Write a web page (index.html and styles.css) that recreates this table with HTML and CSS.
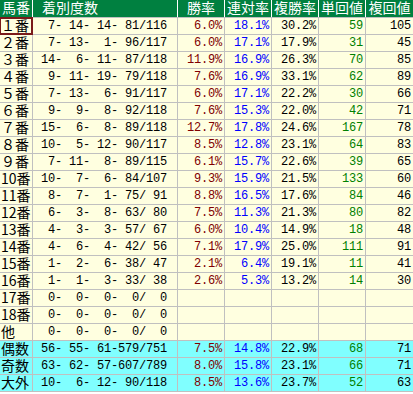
FILE: index.html
```html
<!DOCTYPE html>
<html lang="ja">
<head>
<meta charset="utf-8">
<link rel="stylesheet" href="styles.css">
</head>
<body>
<div class="tbl">
  <div class="row head">
    <div class="c h">馬番</div><div class="c h rec-h">着別度数</div><div class="c h">勝率</div><div class="c h">連対率</div><div class="c h">複勝率</div><div class="c h">単回値</div><div class="c h">複回値</div>
  </div>
  <div class="row"><div class="c lbl sel">１番</div><div class="c rec"> 7- 14- 14- 81/116</div><div class="c num win">6.0%</div><div class="c num ren">18.1%</div><div class="c num fk">30.2%</div><div class="c num tan">59</div><div class="c num fkv">105</div></div>
  <div class="row"><div class="c lbl">２番</div><div class="c rec"> 7- 13-  1- 96/117</div><div class="c num win">6.0%</div><div class="c num ren">17.1%</div><div class="c num fk">17.9%</div><div class="c num tan">31</div><div class="c num fkv">45</div></div>
  <div class="row"><div class="c lbl">３番</div><div class="c rec">14-  6- 11- 87/118</div><div class="c num win">11.9%</div><div class="c num ren">16.9%</div><div class="c num fk">26.3%</div><div class="c num tan">70</div><div class="c num fkv">85</div></div>
  <div class="row"><div class="c lbl">４番</div><div class="c rec"> 9- 11- 19- 79/118</div><div class="c num win">7.6%</div><div class="c num ren">16.9%</div><div class="c num fk">33.1%</div><div class="c num tan">62</div><div class="c num fkv">89</div></div>
  <div class="row"><div class="c lbl">５番</div><div class="c rec"> 7- 13-  6- 91/117</div><div class="c num win">6.0%</div><div class="c num ren">17.1%</div><div class="c num fk">22.2%</div><div class="c num tan">30</div><div class="c num fkv">66</div></div>
  <div class="row"><div class="c lbl">６番</div><div class="c rec"> 9-  9-  8- 92/118</div><div class="c num win">7.6%</div><div class="c num ren">15.3%</div><div class="c num fk">22.0%</div><div class="c num tan">42</div><div class="c num fkv">71</div></div>
  <div class="row"><div class="c lbl">７番</div><div class="c rec">15-  6-  8- 89/118</div><div class="c num win">12.7%</div><div class="c num ren">17.8%</div><div class="c num fk">24.6%</div><div class="c num tan">167</div><div class="c num fkv">78</div></div>
  <div class="row"><div class="c lbl">８番</div><div class="c rec">10-  5- 12- 90/117</div><div class="c num win">8.5%</div><div class="c num ren">12.8%</div><div class="c num fk">23.1%</div><div class="c num tan">64</div><div class="c num fkv">83</div></div>
  <div class="row"><div class="c lbl">９番</div><div class="c rec"> 7- 11-  8- 89/115</div><div class="c num win">6.1%</div><div class="c num ren">15.7%</div><div class="c num fk">22.6%</div><div class="c num tan">39</div><div class="c num fkv">65</div></div>
  <div class="row"><div class="c lbl">10番</div><div class="c rec">10-  7-  6- 84/107</div><div class="c num win">9.3%</div><div class="c num ren">15.9%</div><div class="c num fk">21.5%</div><div class="c num tan">133</div><div class="c num fkv">60</div></div>
  <div class="row"><div class="c lbl">11番</div><div class="c rec"> 8-  7-  1- 75/ 91</div><div class="c num win">8.8%</div><div class="c num ren">16.5%</div><div class="c num fk">17.6%</div><div class="c num tan">84</div><div class="c num fkv">46</div></div>
  <div class="row"><div class="c lbl">12番</div><div class="c rec"> 6-  3-  8- 63/ 80</div><div class="c num win">7.5%</div><div class="c num ren">11.3%</div><div class="c num fk">21.3%</div><div class="c num tan">80</div><div class="c num fkv">82</div></div>
  <div class="row"><div class="c lbl">13番</div><div class="c rec"> 4-  3-  3- 57/ 67</div><div class="c num win">6.0%</div><div class="c num ren">10.4%</div><div class="c num fk">14.9%</div><div class="c num tan">18</div><div class="c num fkv">48</div></div>
  <div class="row"><div class="c lbl">14番</div><div class="c rec"> 4-  6-  4- 42/ 56</div><div class="c num win">7.1%</div><div class="c num ren">17.9%</div><div class="c num fk">25.0%</div><div class="c num tan">111</div><div class="c num fkv">91</div></div>
  <div class="row"><div class="c lbl">15番</div><div class="c rec"> 1-  2-  6- 38/ 47</div><div class="c num win">2.1%</div><div class="c num ren">6.4%</div><div class="c num fk">19.1%</div><div class="c num tan">11</div><div class="c num fkv">41</div></div>
  <div class="row"><div class="c lbl">16番</div><div class="c rec"> 1-  1-  3- 33/ 38</div><div class="c num win">2.6%</div><div class="c num ren">5.3%</div><div class="c num fk">13.2%</div><div class="c num tan">14</div><div class="c num fkv">30</div></div>
  <div class="row"><div class="c lbl">17番</div><div class="c rec"> 0-  0-  0-  0/  0</div><div class="c num"></div><div class="c num"></div><div class="c num"></div><div class="c num"></div><div class="c num"></div></div>
  <div class="row"><div class="c lbl">18番</div><div class="c rec"> 0-  0-  0-  0/  0</div><div class="c num"></div><div class="c num"></div><div class="c num"></div><div class="c num"></div><div class="c num"></div></div>
  <div class="row"><div class="c lbl">他</div><div class="c rec"> 0-  0-  0-  0/  0</div><div class="c num"></div><div class="c num"></div><div class="c num"></div><div class="c num"></div><div class="c num"></div></div>
  <div class="row sum"><div class="c lbl">偶数</div><div class="c rec">56- 55- 61-579/751</div><div class="c num win">7.5%</div><div class="c num ren">14.8%</div><div class="c num fk">22.9%</div><div class="c num tan">68</div><div class="c num fkv">71</div></div>
  <div class="row sum"><div class="c lbl">奇数</div><div class="c rec">63- 62- 57-607/789</div><div class="c num win">8.0%</div><div class="c num ren">15.8%</div><div class="c num fk">23.1%</div><div class="c num tan">66</div><div class="c num fkv">71</div></div>
  <div class="row sum"><div class="c lbl">大外</div><div class="c rec">10-  6- 12- 90/118</div><div class="c num win">8.5%</div><div class="c num ren">13.6%</div><div class="c num fk">23.7%</div><div class="c num tan">52</div><div class="c num fkv">63</div></div>
</div>
</body>
</html>
```
FILE: styles.css
```css
html, body {
  margin: 0;
  padding: 0;
  background: #ffffff;
}

.tbl {
  width: 413px;
  display: flex;
  flex-direction: column;
  row-gap: 1px;
  background: #c0c0c0;
  padding-bottom: 1px;
}

.row {
  display: grid;
  grid-template-columns: 32px 144px 46px 46px 46px 46px 47px;
  column-gap: 1px;
  height: 16px;
  background: #c0c0c0;
}

.row.head {
  height: 17px;
  background: #ffffff;
}

.c {
  background: #ffffe0;
  height: 16px;
  line-height: 16px;
  white-space: pre;
  color: #000000;
  font-family: "Liberation Mono", "DejaVu Sans Mono", monospace;
  font-size: 12px;
  letter-spacing: -0.2px;
}

.row.sum .c {
  background: #80ffff;
}

.c.h {
  background: #008040;
  color: #ffffff;
  height: 17px;
  line-height: 15px;
  text-align: center;
  font-family: "Noto Sans CJK JP", sans-serif;
  font-size: 14px;
  letter-spacing: 0;
}

.c.h.rec-h {
  text-align: left;
  padding-left: 9px;
}

.c.lbl {
  font-family: "Noto Sans CJK JP", sans-serif;
  font-size: 14px;
  line-height: 14px;
  letter-spacing: 0;
  padding-left: 1px;
}

.c.sel {
  position: relative;
  outline: 2px solid #7a1a1a;
  outline-offset: -1px;
  z-index: 1;
}

.c.rec {
  text-align: right;
  padding-right: 10px;
}

.c.num {
  text-align: right;
  padding-right: 2px;
}

.c.win { color: #800000; }
.c.ren { color: #0000ff; }
.c.fk { color: #000000; }
.c.tan { color: #008000; }
.c.fkv { color: #000000; }
```
